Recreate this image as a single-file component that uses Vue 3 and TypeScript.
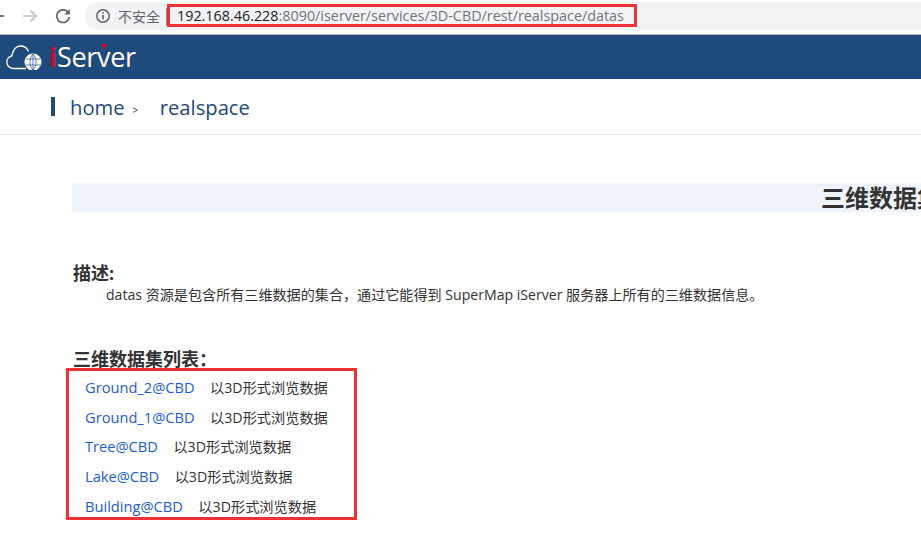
<script setup lang="ts">
interface DataItem { name: string }
const items: DataItem[] = [
  { name: 'Ground_2@CBD' },
  { name: 'Ground_1@CBD' },
  { name: 'Tree@CBD' },
  { name: 'Lake@CBD' },
  { name: 'Building@CBD' },
]
const gridLines: string[] = ['M2.500 7h15', 'M2.500 13h15', 'M10 2v16', 'M10 2c-4 4-4 12 0 16', 'M10 2c4 4 4 12 0 16']
</script>

<template>
  <div class="page">
    <div class="chrome">
      <svg class="nav back" width="6" height="16" viewBox="0 0 6 16"><path d="M0 8h6" stroke="#5f6368" stroke-width="1.800" fill="none" /></svg>
      <svg class="nav forward" width="16" height="16" viewBox="0 0 16 16"><path d="M1 8h13M8.500 2.500 14 8l-5.500 5.500" stroke="#bdc1c6" stroke-width="1.700" fill="none" /></svg>
      <svg class="nav reload" width="16" height="16" viewBox="0 0 16 16"><path d="M13.500 5A6.300 6.300 0 1 0 14.300 9" stroke="#5f6368" stroke-width="1.700" fill="none" /><path d="M14.800 1v5.500H9.300z" fill="#5f6368" /></svg>
      <div class="omnibox">
        <svg class="info" width="16" height="16" viewBox="0 0 16 16"><circle cx="8" cy="8" r="6.200" stroke="#5f6368" stroke-width="1.500" fill="none" /><path d="M8 7v4.500M8 4.300v1.500" stroke="#5f6368" stroke-width="1.600" /></svg>
        <span class="insecure">不安全</span>
        <span class="sep"></span>
        <span class="url"><span class="host">192.168.46.228</span>:8090/iserver/services/3D-CBD/rest/realspace/datas<span class="url-box"></span></span>
      </div>
    </div>

    <header class="banner">
      <svg class="cloud" width="37" height="25" viewBox="0 0 37 25">
        <path d="M20 23.500H7C3.500 23.500 0.800 20.500 0.800 17c0-3 2.200-5.500 5-6C7 5 10 1 14.500 1c3.500 0 6.500 2 8 5.500" stroke="#fff" stroke-width="1.300" fill="none" />
        <g transform="translate(17 7)">
          <circle cx="10" cy="10" r="8.500" fill="#fff" />
          <path v-for="d in gridLines" :key="d" :d="d" stroke="#1f4a7c" stroke-width="0.700" fill="none" />
        </g>
      </svg>
      <span class="brand"><span class="brand-i">i</span>Ser<span class="brand-v">v</span>er</span>
    </header>

    <nav class="crumbs">
      <span class="crumb-mark"></span>
      <span class="crumb">home</span>
      <span class="crumb-sep">&gt;</span>
      <span class="crumb">realspace</span>
    </nav>

    <main class="content">
      <h1 class="title">三维数据集</h1>
      <h2 class="label desc-label">描述:</h2>
      <p class="desc">datas 资源是包含所有三维数据的集合，通过它能得到 SuperMap iServer 服务器上所有的三维数据信息。</p>
      <h2 class="label list-label">三维数据集列表：</h2>
      <ul class="list">
        <li v-for="item in items" :key="item.name" class="row">
          <a class="link">{{ item.name }}</a>
          <a class="view">以3D形式浏览数据</a>
        </li>
        <span class="list-box"></span>
      </ul>
    </main>
  </div>
</template>

<style>
html, body { margin: 0; background: #fff; overflow: hidden; }
</style>

<style scoped>
.page {
  width: 921px;
  height: 551px;
  overflow: hidden;
  font-family: "Open Sans", "Noto Sans CJK SC", sans-serif;
  color: #333;
}
.chrome {
  height: 35px;
  box-sizing: border-box;
  padding-top: 2px;
  display: flex;
  align-items: flex-start;
  border-bottom: 1px solid #b5b5b5;
}
.nav { flex: none; margin-top: 6px; }
.back { margin-left: -2px; }
.forward { margin-left: 18px; }
.reload { margin-left: 17px; }
.omnibox {
  margin-left: 14px;
  flex: 1;
  height: 28px;
  background: #f1f3f4;
  border-radius: 14px 0 0 14px;
  display: flex;
  align-items: center;
  padding-left: 10px;
}
.info { flex: none; }
.insecure { margin-left: 7px; font-size: 14px; color: #5f6368; white-space: nowrap; }
.sep { margin-left: 6px; width: 1px; height: 17px; background: #80868b; }
.url {
  position: relative;
  margin-left: 10px;
  font-size: 14.350px;
  line-height: 20px;
  color: #70757a;
  white-space: nowrap;
}
.host { color: #202124; }
.url-box {
  position: absolute;
  left: -10px;
  top: -2px;
  width: 470px;
  height: 23px;
  box-sizing: border-box;
  border: 3px solid #f03237;
}
.banner {
  height: 44px;
  background: #1f4a7c;
  display: flex;
  align-items: center;
  padding-left: 6px;
  color: #fff;
}
.cloud { flex: none; }
.brand {
  margin-left: 6px;
  font-size: 27px;
  line-height: 44px;
  font-family: "Open Sans", sans-serif;
  letter-spacing: -0.300px;
}
.brand-i { color: #c8102e; font-weight: 700; }
.brand-v { position: relative; }
.brand-v::before {
  content: "";
  position: absolute;
  left: 4px;
  top: 6px;
  border-left: 3px solid transparent;
  border-right: 3px solid transparent;
  border-top: 6px solid #c8102e;
}
.crumbs {
  height: 56px;
  box-sizing: border-box;
  border-bottom: 1px solid #e6e6e6;
  display: flex;
  align-items: center;
  padding-left: 51px;
  color: #1f4a7c;
}
.crumb-mark { width: 4px; height: 19px; background: #1f4a7c; margin-right: 15px; }
.crumb { font-size: 20.200px; }
.crumb-sep { font-size: 10px; color: #333; margin: 6px 21.500px 0 8px; }
.content { padding-left: 72px; }
.title {
  margin: 48px 0 0;
  width: 1618px;
  height: 29px;
  line-height: 29px;
  background: #eff3fb;
  text-align: center;
  font-size: 24px;
  font-weight: 700;
  color: #333;
}
.label {
  margin: 0;
  font-size: 18px;
  font-weight: 700;
  line-height: 24px;
  color: #333;
  padding-left: 1px;
}
.desc-label { margin-top: 50px; line-height: 23px; }
.desc {
  margin: 0;
  padding-left: 34px;
  font-size: 14.100px;
  line-height: 20px;
  white-space: nowrap;
}
.list-label { margin-top: 42px; padding-bottom: 1px; }
.list {
  position: relative;
  list-style: none;
  margin: 0;
  padding: 0 0 0 13px;
}
.row {
  height: 29.700px;
  display: flex;
  align-items: center;
  font-size: 14.650px;
  white-space: nowrap;
}
.link { color: #1a5cd6; }
.view { margin-left: 15.500px; font-size: 14.200px; color: #333; }
.list-box {
  position: absolute;
  left: -6px;
  top: -4px;
  width: 291px;
  height: 152px;
  box-sizing: border-box;
  border: 3px solid #f03237;
}
</style>
